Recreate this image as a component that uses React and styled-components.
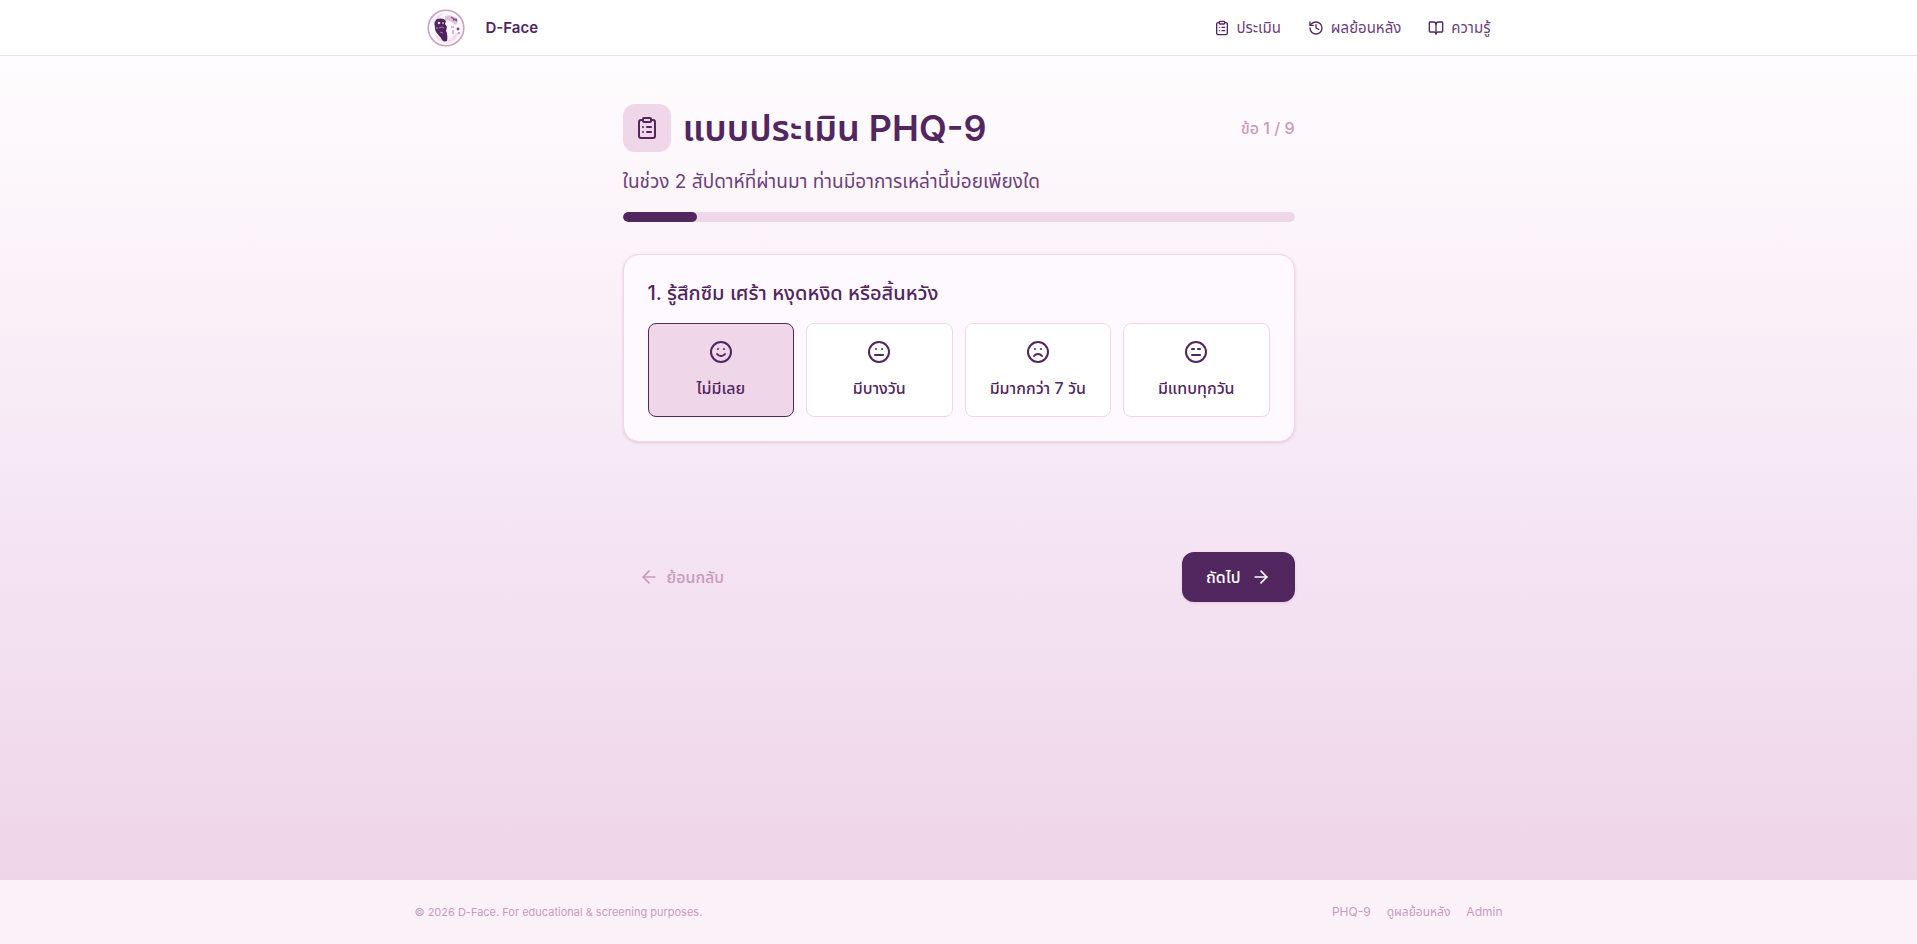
import { useState } from 'react';
import styled, { createGlobalStyle } from 'styled-components';
import {
  Annoyed,
  ArrowLeft,
  ArrowRight,
  BookOpen,
  ClipboardList,
  Frown,
  History,
  Meh,
  Smile,
} from 'lucide-react';

const GlobalStyle = createGlobalStyle`
  :root {
    --plum: #52265f;
    --plum-soft: #6d3f7a;
    --mauve: #c79bbd;
    --pink: #efd6e9;
    --blush: #fef9fe;
  }

  *, *::before, *::after {
    box-sizing: border-box;
  }

  body {
    margin: 0;
    color: var(--plum);
    font-family: Inter, "Noto Sans Thai", "Noto Sans", sans-serif;
    line-height: 24px;
  }

  h1, h2, p {
    margin: 0;
  }

  button {
    font: inherit;
    cursor: pointer;
  }
`;

const Page = styled.div`
  display: flex;
  flex-direction: column;
  min-height: 100vh;
  background: linear-gradient(to bottom, #ffffff 0%, #fbf3f9 27%, #f4e3f2 60%, #eed5e8 94%);
`;

const Header = styled.header`
  background: #ffffff;
  border-bottom: 1px solid #eadfea;
`;

const HeaderInner = styled.div`
  display: flex;
  align-items: center;
  justify-content: space-between;
  max-width: 1088px;
  height: 55px;
  margin: 0 auto;
  padding: 0 12px;
`;

const Brand = styled.a`
  display: flex;
  align-items: center;
  gap: 21px;
  color: var(--plum);
  font-size: 15px;
  font-weight: 600;
  text-decoration: none;
`;

const HeaderNav = styled.nav`
  display: flex;
  gap: 27px;
`;

const NavLink = styled.a`
  display: flex;
  align-items: center;
  gap: 7px;
  color: var(--plum-soft);
  font-size: 15px;
  text-decoration: none;

  svg {
    color: var(--plum);
  }
`;

const Main = styled.main`
  flex: 1;
  width: 100%;
  max-width: 672px;
  margin: 0 auto;
  padding: 48px 0;
`;

const TitleRow = styled.div`
  display: flex;
  align-items: center;
  justify-content: space-between;
`;

const TitleGroup = styled.div`
  display: flex;
  align-items: center;
  gap: 12px;
`;

const TitleIcon = styled.div`
  display: flex;
  align-items: center;
  justify-content: center;
  width: 48px;
  height: 48px;
  background: var(--pink);
  border-radius: 12px;
`;

const Title = styled.h1`
  font-size: 36px;
  font-weight: 600;
  line-height: 48px;
`;

const Counter = styled.span`
  color: var(--mauve);
  font-size: 16px;
  font-weight: 500;
`;

const Subtitle = styled.p`
  margin-top: 16px;
  color: var(--plum-soft);
  font-size: 19px;
  line-height: 28px;
`;

const Track = styled.div`
  height: 10px;
  margin-top: 16px;
  background: var(--pink);
  border-radius: 5px;
  overflow: hidden;
`;

const Bar = styled.div`
  height: 100%;
  background: var(--plum);
  border-radius: 5px;
`;

const Card = styled.section`
  margin-top: 32px;
  padding: 24px;
  background: var(--blush);
  border: 1px solid var(--pink);
  border-radius: 16px;
  box-shadow: 0 1px 3px #e7c5de;
`;

const Question = styled.h2`
  font-size: 20px;
  font-weight: 500;
  line-height: 28px;
`;

const Options = styled.div`
  display: grid;
  grid-template-columns: repeat(4, 1fr);
  gap: 12px;
  margin-top: 16px;
`;

const Option = styled.button`
  display: flex;
  flex-direction: column;
  align-items: center;
  gap: 12px;
  padding: 16px 0;
  color: var(--plum);
  font-size: 16px;
  font-weight: 500;
  background: ${({ $selected }) => ($selected ? 'var(--pink)' : '#ffffff')};
  border: 1px solid ${({ $selected }) => ($selected ? 'var(--plum)' : 'var(--pink)')};
  border-radius: 8px;
`;

const Actions = styled.div`
  display: flex;
  justify-content: space-between;
  margin-top: 110px;
`;

const BackButton = styled.button`
  display: flex;
  align-items: center;
  gap: 8px;
  height: 50px;
  padding: 0 16px;
  color: var(--mauve);
  font-size: 16px;
  font-weight: 500;
  background: transparent;
  border: 0;
`;

const NextButton = styled(BackButton)`
  gap: 10px;
  padding: 0 24px;
  color: #ffffff;
  background: var(--plum);
  border-radius: 12px;
  box-shadow: 0 1px 3px #e3c4dc;
`;

const Footer = styled.footer`
  background: #fbf1f9;
`;

const FooterInner = styled.div`
  display: flex;
  align-items: center;
  justify-content: space-between;
  max-width: 1088px;
  height: 64px;
  margin: 0 auto;
  color: var(--mauve);
  font-size: 11px;
`;

const FooterLinks = styled.nav`
  display: flex;
  gap: 16px;
  font-size: 12px;

  a {
    color: inherit;
    text-decoration: none;
  }
`;

const Logo = () => (
  <svg width="38" height="38" viewBox="0 0 38 38" aria-hidden="true">
    <circle cx="19" cy="19" r="17.8" fill="#fdf7fc" stroke="#cda3c5" strokeWidth="1.6" />
    <path d="M6 12c2-4 6-7 11-8l-5 5-5 8zM5 23l5 7 5 4-2-5zM21 31l8-7 4-1-5 8-9 4z" fill="#f1dfee" />
    <path
      d="M10 10c3-1 7-1 9 2l-1 3 2 3-1 4 2 4-1 6c-3 1-5 0-6-3-2-3-6-5-6-10 0-3-2-5 2-9z"
      fill="#50255f"
    />
    <path d="M18 7c5-2 10 0 13 5l-2 4-6-4-5-1z" fill="#dfc2da" />
    <path d="M24 8l6 4M26 11l4-1" stroke="#80548d" strokeWidth="1.4" />
    <path d="M22 13l6 4-3 4v7l-4 3-1-6 2-5z" fill="#fff8fd" />
    <path d="M24 18h3M25 22h2M25 24h2" stroke="#c9a0c3" strokeWidth="1.5" />
    <circle cx="12" cy="14" r="1.3" fill="#e8cee4" />
    <circle cx="10" cy="19" r="1" fill="#9d74a8" />
    <circle cx="16" cy="14" r="1" fill="#cda3c5" />
    <path d="M12 19l3-1 2 1M13 23l3 1" stroke="#a37aad" fill="none" />
    <circle cx="31" cy="20" r="1.4" fill="#76468a" />
    <circle cx="32" cy="24" r="0.8" fill="#76468a" />
  </svg>
);

const navItems = [
  { label: 'ประเมิน', icon: ClipboardList },
  { label: 'ผลย้อนหลัง', icon: History },
  { label: 'ความรู้', icon: BookOpen },
];

const options = [
  { label: 'ไม่มีเลย', icon: Smile },
  { label: 'มีบางวัน', icon: Meh },
  { label: 'มีมากกว่า 7 วัน', icon: Frown },
  { label: 'มีแทบทุกวัน', icon: Annoyed },
];

const current = 1;
const total = 9;

const App = () => {
  const [selected, setSelected] = useState(0);

  return (
    <Page>
      <GlobalStyle />
      <Header>
        <HeaderInner>
          <Brand href="#">
            <Logo />
            D-Face
          </Brand>
          <HeaderNav>
            {navItems.map(({ label, icon: Icon }) => (
              <NavLink href="#" key={label}>
                <Icon size={16} />
                {label}
              </NavLink>
            ))}
          </HeaderNav>
        </HeaderInner>
      </Header>

      <Main>
        <TitleRow>
          <TitleGroup>
            <TitleIcon>
              <ClipboardList size={24} />
            </TitleIcon>
            <Title>แบบประเมิน PHQ-9</Title>
          </TitleGroup>
          <Counter>ข้อ {current} / {total}</Counter>
        </TitleRow>
        <Subtitle>ในช่วง 2 สัปดาห์ที่ผ่านมา ท่านมีอาการเหล่านี้บ่อยเพียงใด</Subtitle>
        <Track
          role="progressbar"
          aria-label="PHQ-9"
          aria-valuenow={current}
          aria-valuemin={0}
          aria-valuemax={total}
        >
          <Bar style={{ width: `${(current / total) * 100}%` }} />
        </Track>

        <Card>
          <Question>1. รู้สึกซึม เศร้า หงุดหงิด หรือสิ้นหวัง</Question>
          <Options>
            {options.map(({ label, icon: Icon }, i) => (
              <Option
                type="button"
                key={label}
                $selected={i === selected}
                aria-pressed={i === selected}
                onClick={() => setSelected(i)}
              >
                <Icon size={24} />
                {label}
              </Option>
            ))}
          </Options>
        </Card>

        <Actions>
          <BackButton type="button">
            <ArrowLeft size={20} />
            ย้อนกลับ
          </BackButton>
          <NextButton type="button">
            ถัดไป
            <ArrowRight size={20} />
          </NextButton>
        </Actions>
      </Main>

      <Footer>
        <FooterInner>
          <p>© 2026 D-Face. For educational &amp; screening purposes.</p>
          <FooterLinks>
            <a href="#">PHQ-9</a>
            <a href="#">ดูผลย้อนหลัง</a>
            <a href="#">Admin</a>
          </FooterLinks>
        </FooterInner>
      </Footer>
    </Page>
  );
};

export default App;
